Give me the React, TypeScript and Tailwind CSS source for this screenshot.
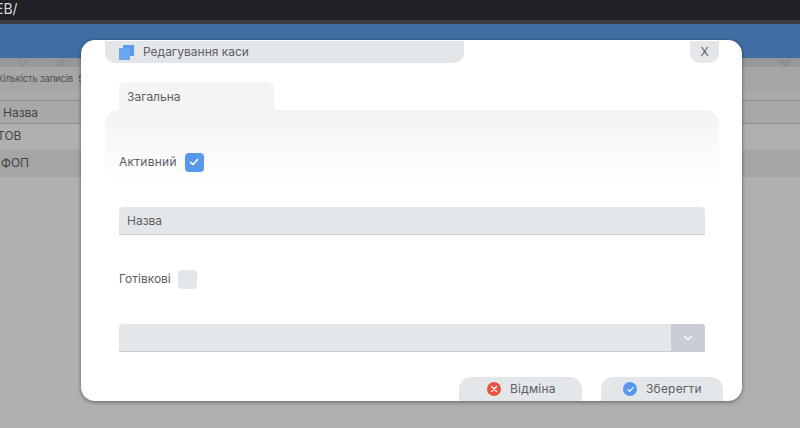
import React from "react";

function Check({ size = 12 }: { size?: number }) {
  return (
    <svg width={size} height={size} viewBox="0 0 12 12" fill="none" stroke="white" strokeWidth="1.5" strokeLinecap="round" strokeLinejoin="round">
      <path d="M2.5 6.3 5 8.6 9.5 3.6" />
    </svg>
  );
}

function Background() {
  return (
    <div className="flex flex-col h-[428px] bg-[#b0b0b0] text-[#444444] text-[12px]">
      <div className="h-[20px] bg-[#202124] text-[#d8d8d8] text-[14px] leading-[18px] shrink-0 overflow-hidden">
        <span className="block -ml-[5px]">EB/</span>
      </div>
      <div className="h-[4px] bg-[#3c3d40] shrink-0" />
      <div className="h-[34px] bg-[#406ea4] shrink-0" />
      <div className="h-[9px] bg-[#989898] shrink-0 flex justify-between pr-[8px]">
        <div className="flex">
          <svg className="ml-[17px]" width="12" height="9" viewBox="0 0 12 9" fill="none" stroke="#8b8b8b" strokeWidth="1.2"><path d="M1 0 6 8 11 1" /></svg>
          <svg className="ml-[26px]" width="13" height="9" viewBox="0 0 13 9" fill="none" stroke="#8b8b8b" strokeWidth="1.2"><path d="M1 9V3h11v6M4 3l1-2h3l1 2" /><circle cx="6.5" cy="6" r="2" /></svg>
        </div>
        <svg width="14" height="9" viewBox="0 0 14 9" fill="none" stroke="#8b8b8b" strokeWidth="1.4"><path d="M1 1 7 8 13 1M4 1 7 5 10 1" /></svg>
      </div>
      <div className="h-[24px] bg-[#a6a6a6] shrink-0 text-[9.5px] tracking-[-0.2px] leading-[24px] whitespace-nowrap -ml-[3px] text-[#505050]">
        Кількість записів&nbsp;&nbsp;5
      </div>
      <div className="h-[10px] bg-[#ababab] shrink-0 border-b border-[#8f8f8f]" />
      <div className="h-[23px] bg-[#a8a8a8] border-b border-[#8f8f8f] shrink-0 pl-[3px] leading-[24px]">Назва</div>
      <div className="h-[26px] bg-[#b0b0b0] shrink-0 leading-[24px] whitespace-nowrap overflow-hidden"><span className="block -ml-[3px]">ТОВ</span></div>
      <div className="h-[27px] bg-[#a5a5a5] shrink-0 leading-[25px] pl-[1px]">ФОП</div>
    </div>
  );
}

function Modal() {
  return (
    <div className="absolute left-[81px] top-[40px] w-[661px] h-[361px] bg-white rounded-[14px] shadow-[0_1px_4px_rgba(0,0,0,0.45)] overflow-hidden text-[#5c5f64] text-[12px]">
      <div className="flex justify-between items-start pt-[1px] pl-[24px] pr-[23px]">
        <div className="w-[359px] h-[22px] bg-[#e4e7ea] rounded-b-[10px] flex items-center pl-[14px]">
          <svg width="15" height="15" viewBox="0 0 15 15">
            <rect x="4" y="0" width="11" height="11" fill="#5b9bef" />
            <rect x="0" y="3" width="11" height="12" fill="#6ca6f1" />
          </svg>
          <span className="ml-[9px]">Редагування каси</span>
        </div>
        <div className="w-[29px] h-[22px] bg-[#e4e7ea] rounded-b-[10px] flex items-center justify-center text-[12px]">X</div>
      </div>
      <div className="ml-[38px] mt-[19px] w-[155px] h-[28px] bg-[#f4f4f5] rounded-t-[6px] pl-[8px] leading-[30px]">Загальна</div>
      <div className="ml-[24px] mr-[23px] h-[73px] rounded-t-[14px] bg-gradient-to-b from-[#f3f3f4] to-white pl-[14px] pt-[42px]">
        <div className="flex items-center gap-[8px] h-[20px]">
          <span className="tracking-[0.25px]">Активний</span>
          <span className="w-[19px] h-[19px] rounded-[4px] bg-[#5898ec] flex items-center justify-center">
            <Check />
          </span>
        </div>
      </div>
      <div className="ml-[38px] mr-[37px] mt-[24px] h-[28px] bg-[#e4e7ea] rounded-t-[4px] border-b border-[#c8ced7] pl-[8px] leading-[28px]">Назва</div>
      <div className="ml-[38px] mt-[34px] flex items-center gap-[7px] h-[20px]">
        <span>Готівкові</span>
        <span className="w-[19px] h-[19px] rounded-[4px] bg-[#e4e7ea]" />
      </div>
      <div className="ml-[38px] mr-[37px] mt-[35px] h-[28px] bg-[#e4e7ea] rounded-t-[4px] border-b border-[#c8ced7] flex justify-end">
        <div className="w-[34px] bg-[#c9ced6] rounded-tr-[4px] flex items-center justify-center">
          <svg width="10" height="10" viewBox="0 0 10 10" fill="none" stroke="white" strokeWidth="1.2" strokeLinecap="round" strokeLinejoin="round"><path d="M1.5 3.5 5 6.5 8.5 3.5" /></svg>
        </div>
      </div>
      <div className="absolute right-[19px] bottom-0 flex gap-[19px]">
        <div className="w-[123px] h-[24px] bg-[#e4e7ea] rounded-t-[12px] flex items-center pl-[28px] gap-[9px] tracking-[0.2px]">
          <span className="w-[14px] h-[14px] rounded-full bg-[#ea5340] flex items-center justify-center">
            <svg width="8" height="8" viewBox="0 0 8 8" stroke="white" strokeWidth="1.4" strokeLinecap="round"><path d="M1.5 1.5 6.5 6.5M6.5 1.5 1.5 6.5" /></svg>
          </span>
          <span>Відміна</span>
        </div>
        <div className="w-[122px] h-[24px] bg-[#e4e7ea] rounded-t-[12px] flex items-center pl-[22px] gap-[9px] tracking-[0.2px]">
          <span className="w-[14px] h-[14px] rounded-full bg-[#5898ec] flex items-center justify-center">
            <Check size={9} />
          </span>
          <span>Зберегти</span>
        </div>
      </div>
    </div>
  );
}

export default function App() {
  return (
    <div className="relative w-[800px] h-[428px] overflow-hidden font-['Inter','Noto_Sans',sans-serif]">
      <Background />
      <Modal />
    </div>
  );
}
